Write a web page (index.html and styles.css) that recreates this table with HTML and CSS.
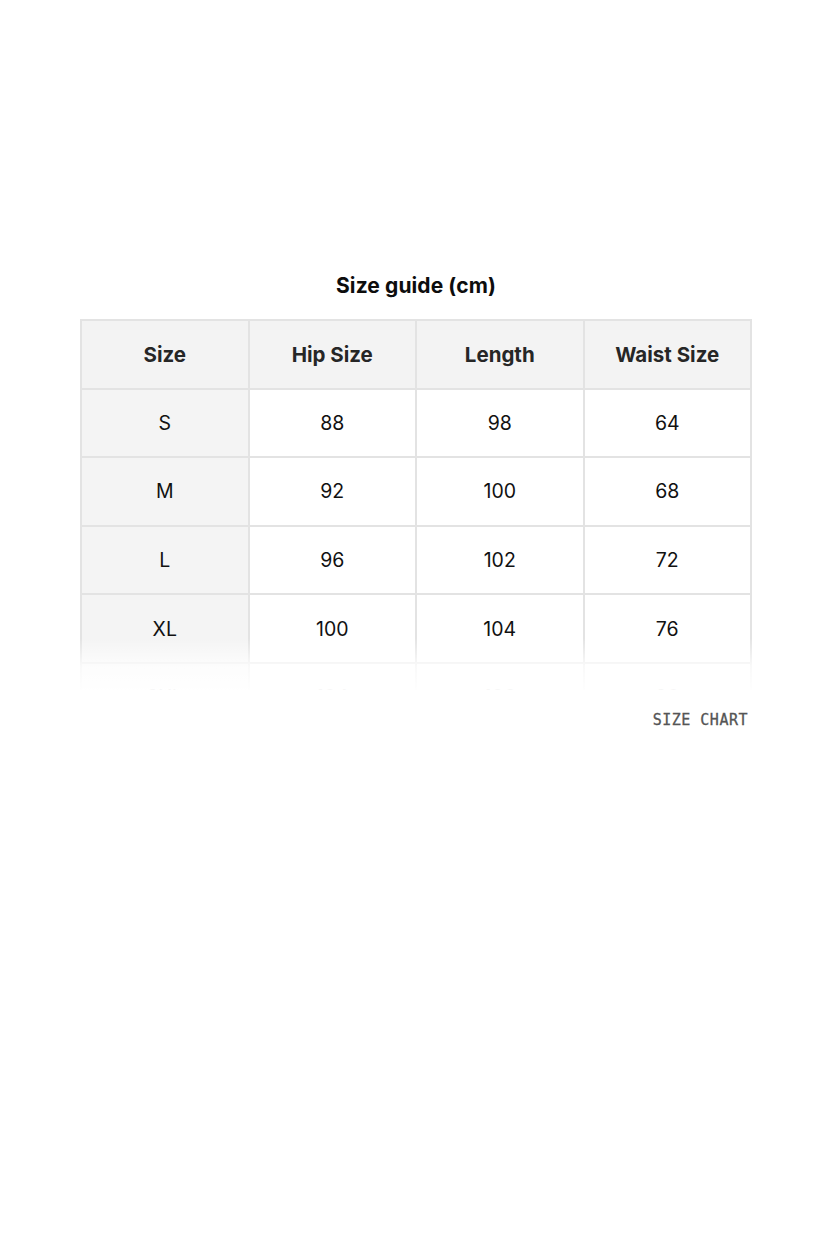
FILE: index.html
```html
<!DOCTYPE html>
<html lang="en">
<head>
<meta charset="utf-8">
<title>Size guide</title>
<link rel="stylesheet" href="styles.css">
</head>
<body>
<main class="guide">
  <h1 class="title">Size guide (cm)</h1>
  <div class="table-wrap">
    <table class="sizes">
      <thead>
        <tr><th>Size</th><th>Hip Size</th><th>Length</th><th>Waist Size</th></tr>
      </thead>
      <tbody>
        <tr><td class="first">S</td><td>88</td><td>98</td><td>64</td></tr>
        <tr><td class="first">M</td><td>92</td><td>100</td><td>68</td></tr>
        <tr><td class="first">L</td><td>96</td><td>102</td><td>72</td></tr>
        <tr><td class="first">XL</td><td>100</td><td>104</td><td>76</td></tr>
        <tr><td class="first">2XL</td><td>104</td><td>106</td><td>80</td></tr>
      </tbody>
    </table>
  </div>
  <div class="caption">SIZE CHART</div>
</main>
</body>
</html>
```
FILE: styles.css
```css
html, body {
  margin: 0;
  padding: 0;
  background: #ffffff;
}
body {
  font-family: Inter, "Noto Sans", "Liberation Sans", sans-serif;
  color: #111;
}
.guide {
  width: 672px;
  margin: 0 auto;
  padding-top: 273px;
}
.title {
  margin: 0 0 21px;
  font-size: 21px;
  line-height: 25px;
  font-weight: 700;
  letter-spacing: 0.1px;
  text-align: center;
  color: #0d0d0d;
}
.table-wrap {
  position: relative;
  height: 371px;
  overflow: hidden;
}
.table-wrap::after {
  content: "";
  position: absolute;
  left: -4px;
  right: -4px;
  bottom: 0;
  height: 52px;
  background: linear-gradient(to bottom, rgba(255,255,255,0) 0%, rgba(255,255,255,0.8) 55%, rgba(255,255,255,0.97) 100%);
}
.sizes {
  width: 672px;
  border-collapse: collapse;
  table-layout: fixed;
}
.sizes th,
.sizes td {
  border: 2px solid #e3e3e3;
  height: 66.6px;
  padding: 0;
  text-align: center;
  vertical-align: middle;
  font-size: 19.5px;
}
.sizes th {
  background: #f3f3f3;
  font-size: 20.5px;
  font-weight: 700;
  color: #262626;
}
.sizes td {
  font-weight: 400;
  color: #111;
}
.sizes td.first {
  background: #f4f4f4;
}
.caption {
  margin-top: 21px;
  padding-right: 4px;
  text-align: right;
  font-family: "DejaVu Sans Mono", "Liberation Mono", monospace;
  font-size: 15px;
  letter-spacing: 0.5px;
  line-height: 18px;
  color: #555;
  -webkit-text-stroke: 0.3px #555;
}
```
